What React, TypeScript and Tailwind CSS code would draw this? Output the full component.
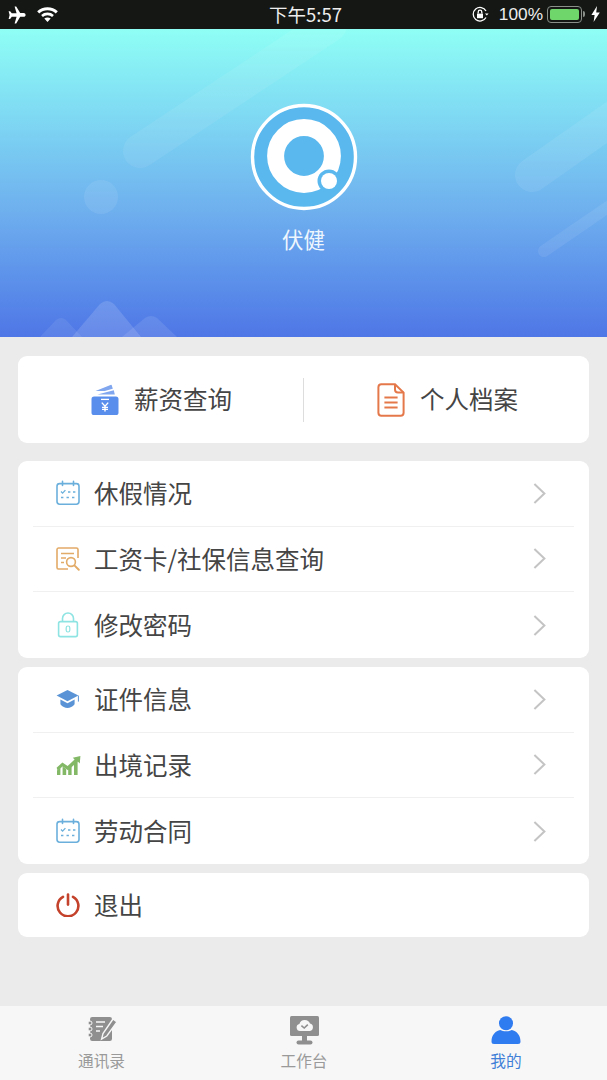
import React from "react";

const CJK = "font-['Noto_Sans_CJK_SC','Noto_Sans',sans-serif]";

// Calendar icon used by two rows
const CalendarIcon = () => (
  <svg width="26" height="26" viewBox="0 0 26 26" fill="none" stroke="#6bb0dc" strokeWidth="1.6">
    <rect x="2" y="3.6" width="22" height="20.6" rx="2.6" />
    <path d="M7.5 1.4v4M18.5 1.4v4" strokeLinecap="round" />
    <path d="M6 11.5l1.6 1.6 2.8-3" strokeWidth="1.3" />
    <path d="M13 12h2.4M18 12h2.4M6 17.5h2.4M11.5 17.5h2.4M17 17.5h2.4" strokeWidth="1.5" />
  </svg>
);

const ReportIcon = () => (
  <svg width="26" height="26" viewBox="0 0 26 26" fill="none" stroke="#e3ab68" strokeWidth="1.6">
    <path d="M13 23H3.4A1.6 1.6 0 0 1 2 21.4V3.6A1.6 1.6 0 0 1 3.6 2h17.8A1.6 1.6 0 0 1 23 3.6V12" />
    <path d="M6 7.5h13M6 12h5M6 16.5h3" />
    <circle cx="16" cy="16" r="4.4" />
    <path d="M19.4 19.4l4.4 4.4" strokeWidth="2" strokeLinecap="round" />
  </svg>
);

const LockIcon = () => (
  <svg width="22" height="26" viewBox="0 0 22 26" fill="none" stroke="#8ee4e2" strokeWidth="1.6">
    <rect x="1.6" y="9.6" width="18.8" height="15" rx="1.8" />
    <path d="M5.5 9.6V6.5a5.5 5.5 0 0 1 11 0v3.1" />
    <rect x="9.2" y="14" width="3.6" height="6" rx="1.8" strokeWidth="1.2" />
  </svg>
);

const CapIcon = () => (
  <svg width="24" height="20" viewBox="0 0 24 20">
    <path d="M11.5 1L0.6 6.6l10.9 5.6 10.9-5.6z" fill="#5b94d6" />
    <path d="M4.4 10.6v4.6c2 2.6 4.6 3.8 7.1 3.8s5.1-1.2 7.1-3.8v-4.6l-7.1 3.7z" fill="#5b94d6" />
    <path d="M22.4 6.6v6" stroke="#5b94d6" strokeWidth="1" />
  </svg>
);

const ChartIcon = () => (
  <svg width="25" height="20" viewBox="0 0 25 20" fill="#82b866">
    <path d="M1 20v-4.6l3.4-2.6V20zM6.6 20v-8.4l3.6 2.4V20zM12.2 20v-6l3.4-3V20zM18 20V8.4l3.6-3.4V20z" />
    <path d="M0.6 12.8L6.4 7.6l5.2 3.4 7-6.4-1.8-1.8L24.4 1l-.6 7.6-2-2-9.8 8.6-5.4-3.6-5 4z" />
  </svg>
);

const PowerIcon = () => (
  <svg width="24" height="24" viewBox="0 0 24 24" fill="none" stroke="#c4422b" strokeWidth="2.6" strokeLinecap="round">
    <path d="M7 3.8a10.4 10.4 0 1 0 10 0" />
    <path d="M12 1.6v10" />
  </svg>
);

const Chevron = () => (
  <svg width="13" height="21" viewBox="0 0 13 21" fill="none" stroke="#c4c4c4" strokeWidth="2">
    <path d="M1.4 1l10 9.5-10 9.5" />
  </svg>
);

const WalletIcon = () => (
  <svg width="28" height="31" viewBox="0 0 28 31">
    <path d="M4.5 7L19.5 1a1 1 0 0 1 1.4.7L22.5 7z" fill="#7fa6ee" />
    <path d="M5 9.500L22.5 4.600l1 4.900z" fill="#fff" />
    <path d="M6.500 10.500L22.800 6.200l1 4.300z" fill="#7fa6ee" />
    <rect x="0.5" y="12.500" width="27" height="18.500" rx="2.600" fill="#5a8eec" />
    <path d="M10 15.400h8" stroke="#fff" strokeWidth="1.3" />
    <path d="M10.800 18.600l3.200 3.600 3.200-3.600M14 22.200v5.400M11 23.400h6M11 25.400h6" stroke="#fff" strokeWidth="1.4" fill="none" />
  </svg>
);

const DocIcon = () => (
  <svg width="28" height="34" viewBox="0 0 28 34" fill="none" stroke="#e5784a" strokeWidth="2">
    <path d="M18 1.200H4.400a3 3 0 0 0-3 3v25.600a3 3 0 0 0 3 3h19.200a3 3 0 0 0 3-3V9.600z" />
    <path d="M18 1.200v5.400a3 3 0 0 0 3 3h5.600" />
    <path d="M7.400 14.600h13.200M7.400 19.600h13.200M7.400 24.600h13.200" />
  </svg>
);

const Row = ({ icon, label, last, arrow = true }: { icon: React.ReactNode; label: string; last?: boolean; arrow?: boolean }) => (
  <div className={`mx-[15px] flex h-[65.67px] items-center ${last ? "" : "border-b border-[#f0f0f0]"}`}>
    <div className="flex w-[61px] justify-center pl-[9px]">
      {icon}
    </div>
    <span className={`flex-1 text-[24.5px] leading-none text-[#454545] ${CJK}`}>{label}</span>
    {arrow && (
      <div className="mr-[28px] flex">
        <Chevron />
      </div>
    )}
  </div>
);

const Tab = ({ icon, label, active }: { icon: React.ReactNode; label: string; active?: boolean }) => (
  <div className="flex flex-1 flex-col items-center pt-[8px]">
    <div className="flex h-[30px] items-end">{icon}</div>
    <span className={`mt-[5px] text-[15.7px] leading-[24px] ${active ? "text-[#3f7fd8]" : "text-[#9a9a9a]"} ${CJK}`}>{label}</span>
  </div>
);

export default function App() {
  return (
    <div className="flex h-[1080px] w-[607px] flex-col overflow-hidden bg-[#ebebeb]">
      {/* status bar */}
      <div className="relative flex h-[29px] items-center bg-[#141714] pl-[8px] pr-[7px] text-white">
        <svg width="20" height="18" viewBox="0 0 20 18" fill="#fff">
          <path d="M8.6 0.6h1.6l4 6.4h3.4c1.2 0 2 .9 2 1.9s-.8 1.9-2 1.9h-3.4l-4 6.6H8.6l2-6.6H5.8l-1.7 2.2H2.6L3.6 9 2.6 5.2h1.5L5.8 7.2h4.8z" transform="translate(-2 0)" />
        </svg>
        <svg className="ml-[9px] -mt-[2px]" width="21" height="16" viewBox="0 0 21 16" fill="none" stroke="#fff" strokeWidth="3">
          <path d="M1.2 6.4c5.2-5 13.400-5 18.600 0" />
          <path d="M5 10c3-2.800 8-2.800 11 0" strokeWidth="2.6" />
          <path d="M10.500 16l-3.200-3.400c1.800-1.400 4.600-1.400 6.400 0z" fill="#fff" stroke="none" />
        </svg>
        <span className={`absolute left-[4px] right-0 text-center text-[18.5px] leading-none text-[#eeeeee] ${CJK}`}>下午5:57</span>
        <div className="ml-auto flex items-center">
          <svg width="17" height="17" viewBox="0 0 17 17" fill="none" stroke="#fff" strokeWidth="1.3">
            <path d="M14 11.500A6.800 6.800 0 1 1 14 5" />
            <path d="M13 7.400h3.600l-1.800 2.200z" fill="#fff" stroke="none" />
            <rect x="5" y="7.600" width="6" height="4.600" fill="#fff" stroke="none" />
            <path d="M6.200 7.600V6a1.800 1.800 0 0 1 3.600 0v1.600" />
          </svg>
          <span className="ml-[10px] font-['Liberation_Sans',sans-serif] text-[17.3px] leading-none text-[#eeeeee]">100%</span>
          <div className="ml-[4px] flex h-[17px] w-[35px] items-center rounded-[4px] border border-[#8a8f8a] p-[2px]">
            <div className="h-full w-full rounded-[2px] bg-[#6fd66c]" />
          </div>
          <div className="ml-[1px] h-[6px] w-[2px] rounded-r-sm bg-[#8a8f8a]" />
          <svg className="ml-[6px]" width="9" height="16" viewBox="0 0 9 16" fill="#fff">
            <path d="M6 0L0.4 9h3.2L2.6 16 8.8 6.4H5.2z" />
          </svg>
        </div>
      </div>

      {/* header */}
      <div className="relative flex h-[308px] flex-col items-center bg-gradient-to-b from-[#8ffff5] via-[#6eaeee] via-60% to-[#4f76e6] pt-[74px]">
        <svg className="absolute inset-0" width="607" height="308" viewBox="0 0 607 308" fill="#fff">
          <path d="M140 122L330 -4" stroke="#fff" strokeOpacity="0.07" strokeWidth="34" strokeLinecap="round" fill="none" />
          <path d="M532 146L640 70" stroke="#fff" strokeOpacity="0.08" strokeWidth="34" strokeLinecap="round" fill="none" />
          <path d="M544 222L640 156" stroke="#fff" strokeOpacity="0.08" strokeWidth="12" strokeLinecap="round" fill="none" />
          <circle cx="101" cy="168" r="17" fillOpacity="0.08" />
          <path d="M72 308L100 275Q107 269 114 275L141 308z" fillOpacity="0.14" />
          <path d="M40 308L56 291Q61 287 66 291L82 308z" fillOpacity="0.08" />
          <path d="M122 308L145 289Q151 285 157 289L177 308z" fillOpacity="0.1" />
        </svg>
        <svg className="relative" width="108" height="108" viewBox="0 0 108 108">
          <circle cx="54" cy="54" r="51.5" fill="#5ab8ee" stroke="#fff" strokeWidth="3.4" />
          <circle cx="54" cy="53" r="28.4" fill="none" stroke="#fff" strokeWidth="17" />
          <circle cx="79" cy="78" r="11.5" fill="#5ab8ee" />
          <circle cx="79" cy="78" r="8" fill="#fff" />
        </svg>
        <span className={`relative mt-[17px] text-[21.5px] leading-none text-[#eef6fd] ${CJK}`}>伏健</span>
      </div>

      {/* main content */}
      <div className="flex flex-1 flex-col px-[18px] pt-[19px]">
        <div className="flex h-[87px] items-center rounded-[9px] bg-white">
          <div className="flex flex-1 items-center justify-center gap-[15px] pl-[2px]">
            <WalletIcon />
            <span className={`text-[24.5px] leading-none text-[#454545] ${CJK}`}>薪资查询</span>
          </div>
          <div className="h-[44px] w-px bg-[#dddddd]" />
          <div className="flex flex-1 items-center justify-center gap-[15px] pl-[2px]">
            <DocIcon />
            <span className={`text-[24.5px] leading-none text-[#454545] ${CJK}`}>个人档案</span>
          </div>
        </div>

        <div className="mt-[18px] rounded-[9px] bg-white">
          <Row icon={<CalendarIcon />} label="休假情况" />
          <Row icon={<ReportIcon />} label="工资卡/社保信息查询" />
          <Row icon={<LockIcon />} label="修改密码" last />
        </div>

        <div className="mt-[9px] rounded-[9px] bg-white">
          <Row icon={<CapIcon />} label="证件信息" />
          <Row icon={<ChartIcon />} label="出境记录" />
          <Row icon={<CalendarIcon />} label="劳动合同" last />
        </div>

        <div className="mt-[9px] h-[64px] overflow-hidden rounded-[9px] bg-white">
          <div className="-mt-px">
            <Row icon={<PowerIcon />} label="退出" last arrow={false} />
          </div>
        </div>
      </div>

      {/* tab bar */}
      <div className="flex h-[74px] bg-[#f7f7f7]">
        <div className="flex w-[203px] justify-center">
          <Tab
            label="通讯录"
            icon={
              <svg className="mb-[3px]" width="30" height="24" viewBox="0 0 30 24" fill="#8f8f8f">
                <rect x="3" y="0" width="22" height="24" rx="2.2" />
                <circle cx="3" cy="6" r="2" stroke="#f7f7f7" strokeWidth="1" />
                <circle cx="3" cy="12" r="2" stroke="#f7f7f7" strokeWidth="1" />
                <circle cx="3" cy="18" r="2" stroke="#f7f7f7" strokeWidth="1" />
                <path d="M9 5h9M9 9.5h7M9 14h4" stroke="#f7f7f7" strokeWidth="1.5" />
                <path d="M26 2L16 16.5l-1.4 5.5 5.2-3L30 5z" fill="#8f8f8f" stroke="#f7f7f7" strokeWidth="1.4" />
              </svg>
            }
          />
        </div>
        <div className="flex flex-1 justify-center">
          <Tab
            label="工作台"
            icon={
              <svg className="mb-[-1px]" width="29" height="29" viewBox="0 0 29 29" fill="#8f8f8f">
                <rect x="0" y="0" width="29" height="20" rx="1.5" />
                <rect x="12" y="19" width="5" height="6" />
                <rect x="6.5" y="24.5" width="16" height="4" rx="2" />
                <path d="M10 15a3.6 3.6 0 0 1-.6-7.1A5.6 5.6 0 0 1 20 7.6 3.8 3.8 0 0 1 20 15z" fill="#f7f7f7" />
                <path d="M11.4 9.6l2.8 2.4 3.6-3.4" stroke="#8f8f8f" strokeWidth="1.6" fill="none" />
              </svg>
            }
          />
        </div>
        <div className="flex w-[202px] justify-center">
          <Tab
            label="我的"
            active
            icon={
              <svg width="30" height="28" viewBox="0 0 30 28" fill="#2f7bf0">
                <circle cx="15" cy="7.2" r="7" />
                <path d="M0.5 25.5c0-6.5 4-10.5 8.800-11.500 3 1.800 8.400 1.800 11.400 0 4.800 1 8.800 5 8.800 11.500q0 2.500-2.500 2.500H3q-2.500 0-2.500-2.500z" />
              </svg>
            }
          />
        </div>
      </div>
    </div>
  );
}
